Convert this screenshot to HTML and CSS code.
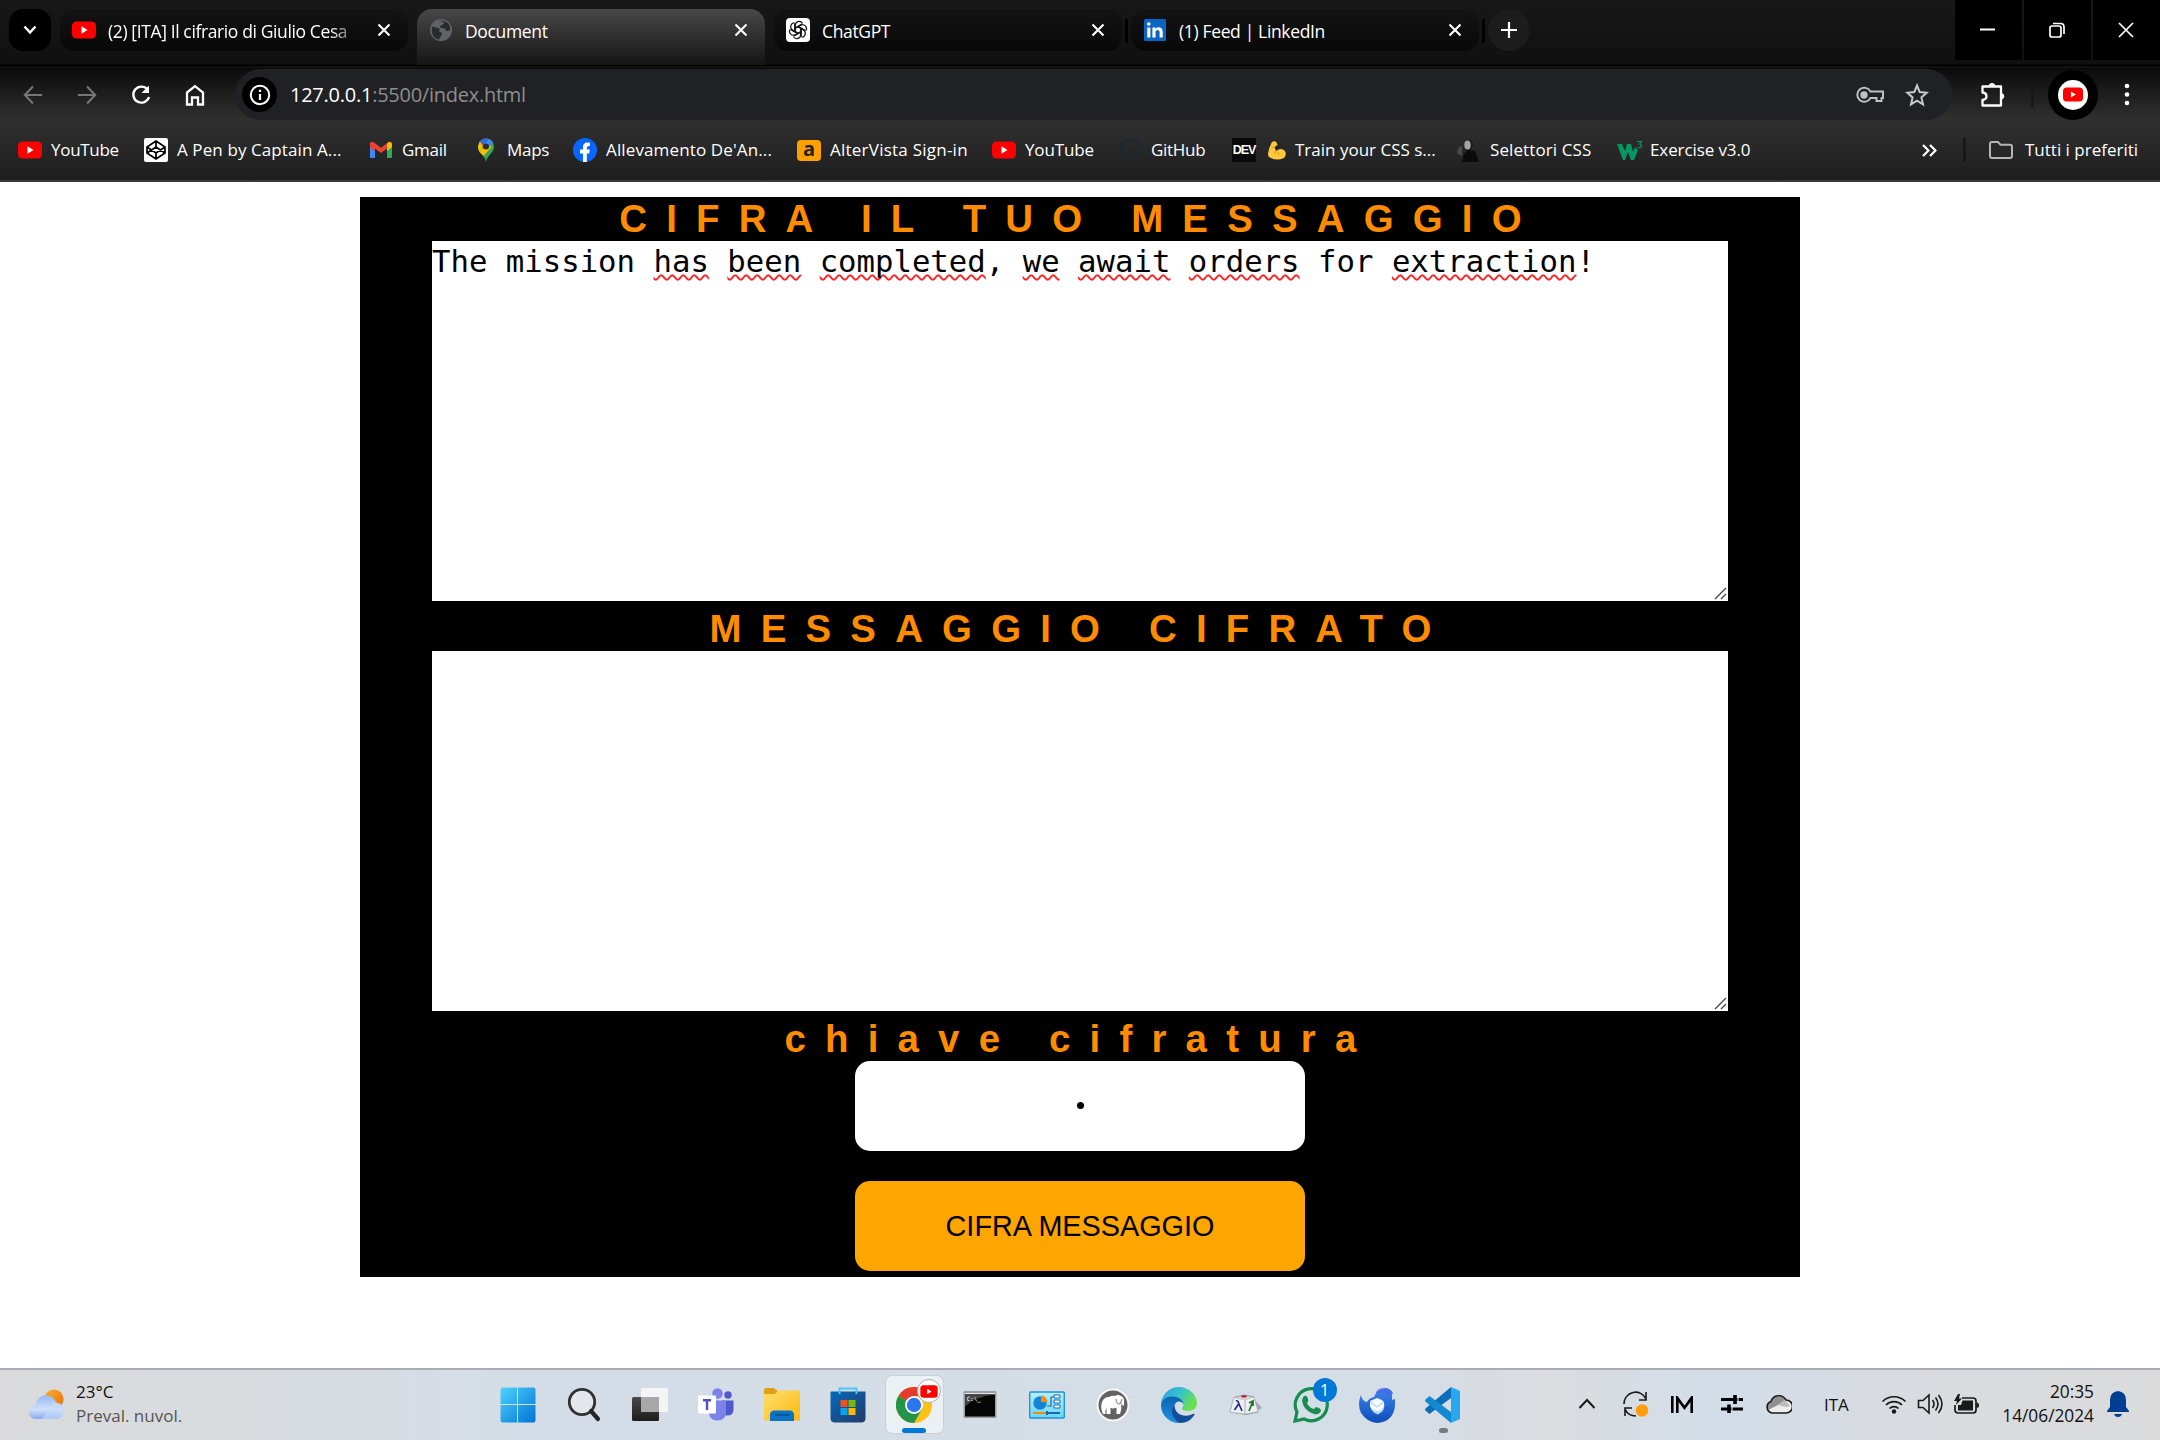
FILE: index.html
```html
<!DOCTYPE html>
<html lang="it">
<head>
<meta charset="utf-8">
<title>Document</title>
<link rel="stylesheet" href="styles.css">
</head>
<body>
<svg class="defs" width="0" height="0">
  <defs>
    <linearGradient id="win" x1="0" y1="0" x2="1" y2="1"><stop offset="0" stop-color="#4fd3ff"/><stop offset="1" stop-color="#0073d2"/></linearGradient>
    <linearGradient id="sun" x1="0" y1="0" x2="1" y2="1"><stop offset="0" stop-color="#f2b62c"/><stop offset="1" stop-color="#f0660c"/></linearGradient>
    <linearGradient id="cloud" x1="0" y1="0" x2="0" y2="1"><stop offset="0" stop-color="#94b8f2"/><stop offset=".6" stop-color="#cfe0fa"/><stop offset="1" stop-color="#86aaf0"/></linearGradient>
    <linearGradient id="dark" x1="0" y1="0" x2="0" y2="1"><stop offset="0" stop-color="#4a4a4a"/><stop offset="1" stop-color="#1c1c1c"/></linearGradient>
    <linearGradient id="folder" x1="0" y1="0" x2="1" y2="1"><stop offset="0" stop-color="#ffdf70"/><stop offset="1" stop-color="#fbb90e"/></linearGradient>
    <linearGradient id="store" x1="0" y1="0" x2="1" y2="1"><stop offset="0" stop-color="#0669b8"/><stop offset="1" stop-color="#243a6b"/></linearGradient>
    <linearGradient id="edgeA" x1="0" y1="0" x2="1" y2=".5"><stop offset="0" stop-color="#2a9fe0"/><stop offset=".5" stop-color="#35c1d0"/><stop offset="1" stop-color="#6be04e"/></linearGradient>
    <linearGradient id="edgeB" x1="0" y1="0" x2="0" y2="1"><stop offset="0" stop-color="#0c62b0"/><stop offset="1" stop-color="#1b93e0"/></linearGradient>
    <linearGradient id="bird" x1="0" y1="0" x2="0" y2="1"><stop offset="0" stop-color="#3f86f0"/><stop offset="1" stop-color="#0c4db8"/></linearGradient>
    <linearGradient id="panel" x1="0" y1="0" x2="0" y2="1"><stop offset="0" stop-color="#b5effc"/><stop offset="1" stop-color="#6cd6f7"/></linearGradient>
    <symbol id="yt" viewBox="0 0 24 18"><rect y=".5" width="24" height="17" rx="4.5" fill="#f00"/><path d="M9.500 5.300v7.400L15.500 9z" fill="#fff"/></symbol>
    <symbol id="x" viewBox="0 0 14 14"><path d="M1.500 1.500l11 11M12.500 1.500l-11 11" stroke="#fff" stroke-width="2.100" fill="none"/></symbol>
  </defs>
</svg>

<header class="browser">
  <div class="tabstrip">
    <button class="search-tabs"><svg width="14" height="10" viewBox="0 0 14 10"><path d="M1.500 1.500L7 7.500l5.500-6" fill="none" stroke="#fff" stroke-width="2.400"/></svg></button>
    <div class="tab first">
      <svg class="fav" width="24" height="18"><use href="#yt"/></svg>
      <span class="title fade t1">(2) [ITA] Il cifrario di Giulio Cesa</span>
      <svg class="close" width="14" height="14"><use href="#x"/></svg>
    </div>
    <div class="tab active">
      <svg class="fav" width="24" height="24" viewBox="0 0 24 24"><circle cx="12" cy="12" r="11" fill="#5f6368"/><path d="M3 9c3-1 4 1 6 1s2 2 1 4c3 0 4 2 2 4s-1 3-2 3.500C5 21 2 16 3 9zM10 3c2 1 5 0 5 2s-4 2-4 4 4 0 5 2 3 3 5 1c1-5-3-10-11-9z" fill="#2b2b2b"/></svg>
      <span class="title">Document</span>
      <svg class="close" width="14" height="14"><use href="#x"/></svg>
    </div>
    <div class="tab">
      <svg class="fav" width="24" height="24" viewBox="0 0 24 24"><rect width="24" height="24" rx="4" fill="#fff"/><g fill="none" stroke="#111" stroke-width="1.200"><path id="petal" d="M9.300 13.600V7.300a3.900 3.900 0 0 1 7.200-2M9.300 9.800l5.300-3.100a3.900 3.900 0 0 1 1.900-.5"/><use href="#petal" transform="rotate(60 12 12)"/><use href="#petal" transform="rotate(120 12 12)"/><use href="#petal" transform="rotate(180 12 12)"/><use href="#petal" transform="rotate(240 12 12)"/><use href="#petal" transform="rotate(300 12 12)"/></g></svg>
      <span class="title">ChatGPT</span>
      <svg class="close" width="14" height="14"><use href="#x"/></svg>
    </div>
    <i class="tab-sep"></i>
    <div class="tab">
      <svg class="fav" width="22" height="22" viewBox="0 0 22 22"><rect width="22" height="22" rx="1.500" fill="#0a66c2"/><path d="M3.300 8.500h3.100v10H3.300zM8.400 8.500h3v1.400c1.400-2.500 7.300-2.500 7.300 2.800v5.800h-3.100v-5.300c0-3.100-4.100-2.900-4.100 0v5.300H8.400z" fill="#fff"/><circle cx="4.800" cy="5" r="1.800" fill="#fff"/></svg>
      <span class="title feed">(1) Feed | LinkedIn</span>
      <svg class="close" width="14" height="14"><use href="#x"/></svg>
    </div>
    <i class="tab-sep last"></i>
    <button class="new-tab"><svg width="16" height="16" viewBox="0 0 16 16"><path d="M8 0v16M0 8h16" stroke="#fff" stroke-width="2.200"/></svg></button>
    <div class="window-buttons">
      <span><svg width="15" height="16" viewBox="0 0 15 16"><path d="M0 7.500h15" stroke="#fff" stroke-width="2"/></svg></span>
      <span><svg width="16" height="16" viewBox="0 0 16 16" fill="none" stroke="#fff" stroke-width="1.700"><rect x="1" y="4" width="11" height="11" rx="2"/><path d="M4 1.500h7.500c2 0 3.500 1.500 3.500 3.500v7"/></svg></span>
      <span><svg width="16" height="16" viewBox="0 0 16 16"><path d="M1 1l14 14M15 1L1 15" stroke="#fff" stroke-width="1.700"/></svg></span>
    </div>
  </div>

  <div class="toolbar">
    <nav class="nav">
      <svg width="20" height="20" viewBox="0 0 20 20" fill="none" stroke="#777" stroke-width="2"><path d="M19 10H2M10 1.500L1.800 10l8.200 8.500"/></svg>
      <svg width="20" height="20" viewBox="0 0 20 20" fill="none" stroke="#777" stroke-width="2"><path d="M1 10h17M10 1.500l8.200 8.500-8.200 8.500"/></svg>
      <svg width="20" height="20" viewBox="0 0 20 20" fill="none" stroke="#fff" stroke-width="2.400"><path d="M16.500 4.500A8 8 0 1 0 18 12"/><path d="M18 .500v7.500h-7.500z" fill="#fff" stroke="none"/></svg>
      <svg width="20" height="22" viewBox="0 0 20 22" fill="none" stroke="#fff" stroke-width="2.300"><path d="M2 8.500l8-6.300 8 6.300v12h-5v-7H7v7H2z"/></svg>
    </nav>
    <div class="omnibox">
      <span class="info"><svg width="22" height="22" viewBox="0 0 22 22"><circle cx="11" cy="11" r="9.200" fill="none" stroke="#fff" stroke-width="2"/><path d="M11 10v6M11 5.800v2.200" stroke="#fff" stroke-width="2.200"/></svg></span>
      <span class="url"><b>127.0.0.1</b>:5500/index.html</span>
      <svg class="key" width="28" height="18" viewBox="0 0 28 18" fill="none" stroke="#c0c0c0" stroke-width="2"><path d="M14.500 5.500H27v6.500h-1.500v3h-5v-3h-6A7 7 0 1 1 14.500 5.500z"/><circle cx="8" cy="9" r="2.700" fill="#c0c0c0"/></svg>
      <svg class="star" width="24" height="24" viewBox="0 0 24 24" fill="none" stroke="#c8c8c8" stroke-width="2"><path d="M12 2.500l2.700 6.600 7 .6-5.300 4.700 1.600 6.900-6-3.700-6 3.700 1.600-6.900-5.300-4.700 7-.6z"/></svg>
    </div>
    <svg class="puzzle" width="26" height="26" viewBox="0 0 26 26" fill="none" stroke="#fff" stroke-width="2.300"><path d="M2.500 4.500h18.500v19H2.500v-5.500q4-.500 4-3.700t-4-3.800z" stroke-linejoin="round"/><path d="M9 4.500a3 3 0 0 1 6 0zM21 11.500a2.800 2.800 0 0 1 0 5.600z" fill="#fff" stroke-width="1"/></svg>
    <i class="bar-sep"></i>
    <span class="avatar"><span><svg width="20" height="15"><use href="#yt"/></svg></span></span>
    <svg class="dots" width="6" height="28" viewBox="0 0 6 28" fill="#fff"><circle cx="3" cy="3" r="2.300"/><circle cx="3" cy="11.500" r="2.300"/><circle cx="3" cy="20" r="2.300"/></svg>
  </div>

  <div class="bookmarks">
    <a><svg width="24" height="18"><use href="#yt"/></svg><span class="b-yt">YouTube</span></a>
    <a><svg width="24" height="24" viewBox="0 0 24 24"><rect width="24" height="24" rx="2" fill="#fff"/><path d="M12 3l9 6v6l-9 6-9-6V9zM12 3v6M12 15v6M3 9l9 6 9-6M3 15l9-6 9 6" fill="none" stroke="#000" stroke-width="1.700"/></svg><span class="b-pen">A Pen by Captain A...</span></a>
    <a><svg width="24" height="18" viewBox="0 0 24 18"><path d="M1 3v13q0 1 1 1h4V7z" fill="#4285f4"/><path d="M23 3v13q0 1-1 1h-4V7z" fill="#34a853"/><path d="M1 2q2-2 4-.500l7 5.200 7-5.200Q22 0 23 2l-5 8V7.500L12 12 6 7.500V10L1 6.500z" fill="#ea4335"/><path d="M18 7.500V2.300L20 1q3 0 3 2.500V6l-5 4z" fill="#fbbc04"/></svg><span class="b-gmail">Gmail</span></a>
    <a><svg width="24" height="24" viewBox="0 0 24 24"><path d="M12 24C11 17 4 15 4 8.500a8 8 0 0 1 16 0C20 15 13 17 12 24z" fill="#34a853"/><path d="M5.500 14Q4 11.500 4 8.500L6 3l3 3-1 5z" fill="#fbbc04"/><path d="M5.500 14l9-10 3 5-8 9z" fill="#fbbc04"/><path d="M6 3.200Q9-.500 14.500 1L8.500 8z" fill="#ea4335"/><path d="M14.500.900q3 1 4.500 4l-6 6.500-3-5z" fill="#4285f4"/><path d="M8 1.800Q11 0 14.500.900L9.500 7 6 3.300z" fill="#1a73e8"/><circle cx="12" cy="8.500" r="3" fill="#2d2d2d"/></svg><span class="b-maps">Maps</span></a>
    <a><svg width="24" height="24" viewBox="0 0 24 24"><circle cx="12" cy="12" r="12" fill="#0866ff"/><path d="M10 24v-8.500H7v-4h3V9.500c0-4 2-5.500 7-4.800v3.400c-2.500-.2-3.200.3-3.200 3.400h3l-.6 4h-2.400V24z" fill="#fff"/></svg><span class="b-alle">Allevamento De'An...</span></a>
    <a><i class="alter">a</i><span class="b-alt">AlterVista Sign-in</span></a>
    <a><svg width="24" height="18"><use href="#yt"/></svg><span class="b-yt2">YouTube</span></a>
    <a><svg width="24" height="24" viewBox="0 0 24 24"><path d="M9 23v-4q-3 1-4-2l-2-2q2-.500 3.500 2 1.500 1 3 0 0-2 1-2.500-6-1-5.500-7l1-2V3q2 0 3.500 1.200h5Q16 3 18 3v3q2 3 .500 6-1 2-4.500 2.500 1 1 1 3V23A11.500 11.500 0 1 0 9 23z" fill="#20272e"/></svg><span class="b-git">GitHub</span></a>
    <a><i class="dev">DEV</i><svg class="arm" width="18" height="19" viewBox="0 0 18 19"><path d="M4 1q3-1.500 4.500.500l1 2.500-3 2L8 10q5-4 9 0 2 4-1 7-7 3-13 0-3-1-3-4Q1 6 4 1z" fill="#ffc83d"/><path d="M6 6L3.500 7M8 10l-2 3M9 11q2 1 1.500 3" fill="none" stroke="#e89f1c" stroke-width="1.200"/></svg><span class="b-css">Train your CSS s...</span></a>
    <a><svg width="24" height="24" viewBox="0 0 24 24"><path d="M3 8q-4 5-2 8l4 2V9z" fill="#484848"/><path d="M9 2q6-1 7 5l-2 5-4 2-3-5z" fill="#1a1a1a"/><ellipse cx="10.500" cy="7" rx="3.200" ry="4.500" fill="#a5a5a5"/><path d="M5 24l2-8 4-4 7 1 4 11z" fill="#0b0b0b"/></svg><span class="b-sel">Selettori CSS</span></a>
    <a><svg width="26" height="20" viewBox="0 0 26 20"><path d="M0 4h5l3 7 2-7h4l2 8 2-5 3 3-4 10h-3l-3-8-3 8H6z" fill="#059862"/><path d="M20 1.500h4.500l-2 2.500q2 0 2 2t-4 1.500" fill="none" stroke="#059862" stroke-width="1.200"/></svg><span class="b-ex">Exercise v3.0</span></a>
    <svg class="more" width="15" height="13" viewBox="0 0 15 13" fill="none" stroke="#fff" stroke-width="2.200"><path d="M1 1l5.500 5.500L1 12M8 1l5.500 5.500L8 12"/></svg>
    <i class="bar-sep"></i>
    <a><svg width="24" height="18" viewBox="0 0 24 18"><path d="M3 1h6l2.500 2.700H21q2 0 2 2V15q0 2-2 2H3q-2 0-2-2V3q0-2 2-2z" fill="none" stroke="#b5b5b5" stroke-width="2"/></svg><span class="b-all">Tutti i preferiti</span></a>
  </div>
</header>

<main class="page">
  <section class="cipher">
    <h2>CIFRA IL TUO MESSAGGIO</h2>
    <div class="area">The mission <u>has</u> <u>been</u> <u>completed</u>, <u>we</u> <u>await</u> <u>orders</u> for <u>extraction</u>!<svg class="grip" width="13" height="13" viewBox="0 0 13 13"><path d="M1 12L12 1M7 12l5-5" stroke="#444" stroke-width="1.300"/></svg></div>
    <h2>MESSAGGIO CIFRATO</h2>
    <div class="area"><svg class="grip" width="13" height="13" viewBox="0 0 13 13"><path d="M1 12L12 1M7 12l5-5" stroke="#444" stroke-width="1.300"/></svg></div>
    <h2>chiave cifratura</h2>
    <div class="key-field"><i></i></div>
    <button class="submit">CIFRA MESSAGGIO</button>
  </section>
</main>

<footer class="taskbar">
  <div class="weather">
    <svg width="36" height="31" viewBox="0 0 36 31"><circle cx="25" cy="10" r="9.500" fill="url(#sun)"/><path d="M7 30a7 7 0 0 1-.5-14A10.500 10.500 0 0 1 27 13.500 8.300 8.300 0 0 1 28 30z" fill="url(#cloud)"/><path d="M20 20q1-6 7-6.500a8.300 8.300 0 0 1 1 16.500H13z" fill="#c8dbf8" opacity=".6"/></svg>
    <p><span class="w1">23°C</span><span class="w2">Preval. nuvol.</span></p>
  </div>
  <div class="apps">
    <span><svg width="36" height="36" viewBox="0 0 36 36"><path d="M.500 2.500q0-2 2-2H17V17H.500zM18 .500h15.500q2 0 2 2V17H18zM.500 18H17v17.500H2.500q-2 0-2-2zM18 18h17.500v15.500q0 2-2 2H18z" fill="url(#win)"/></svg></span>
    <span><svg width="36" height="36" viewBox="0 0 36 36"><circle cx="16" cy="15" r="12.700" fill="#e3e6ea" stroke="#303030" stroke-width="2.800"/><path d="M25 24l7 8" stroke="#242424" stroke-width="4.200" stroke-linecap="round"/></svg></span>
    <span><svg width="36" height="36" viewBox="0 0 36 36"><rect x="0" y="10" width="27" height="24" rx="1.500" fill="url(#dark)"/><rect x="9" y="1" width="27" height="24" rx="1.500" fill="#f4f4f4"/><path d="M9 10h18v15H9z" fill="#a8a8a8"/></svg></span>
    <span><svg width="36" height="36" viewBox="0 0 36 36"><circle cx="19.500" cy="6.500" r="5.300" fill="#7b83eb"/><circle cx="30" cy="8" r="3.700" fill="#5059c9"/><path d="M24 13.500h11.500v9q0 6-6 6T24 24z" fill="#5059c9"/><path d="M11 13.500h17V25q0 8.500-8.500 8.500T11 25z" fill="#7b83eb"/><rect x="0" y="8.500" width="18" height="18" rx="1" fill="#fff"/><path d="M5 13.300h8M9 13v10" stroke="#4b53bc" stroke-width="2.400"/></svg></span>
    <span><svg width="36" height="36" viewBox="0 0 36 36"><path d="M0 3q0-2 2-2h8l4 3.500v6H0z" fill="#dfa011"/><path d="M0 7h11l3-3.500h20q2 0 2 2v28H0z" fill="url(#folder)"/><path d="M6 34v-6q0-4.500 4.500-4.500h15Q30 23.500 30 28v6z" fill="#0b72c4"/><path d="M11 28h14" stroke="#054c88" stroke-width="1.500"/></svg></span>
    <span><svg width="36" height="36" viewBox="0 0 36 36"><path d="M.500 4.500h35V31q0 4.500-4.500 4.500H5Q.500 35.500.500 31z" fill="url(#store)"/><path d="M9.500 7V1.500h17V7" fill="none" stroke="#43c8fa" stroke-width="2"/><path d="M10.500 13h7v7h-7z" fill="#f25022"/><path d="M18.500 13h7v7h-7z" fill="#7fba00"/><path d="M10.500 21h7v7h-7z" fill="#00a4ef"/><path d="M18.500 21h7v7h-7z" fill="#ffb900"/></svg></span>
    <span class="current"><svg width="36" height="36" viewBox="0 0 36 36"><circle cx="18" cy="18" r="18" fill="#fbc116"/><path d="M18 18L2.400 9A18 18 0 0 1 33.600 9H18z" fill="#e33b2e"/><path d="M18 18l7.800 4.500L18 36A18 18 0 0 1 2.400 9z" fill="#229548"/><circle cx="18" cy="18" r="9" fill="#fff"/><circle cx="18" cy="18" r="7.200" fill="#2a77ee"/></svg><span class="profile"><svg width="18" height="13"><use href="#yt"/></svg></span></span>
    <span><svg width="36" height="36" viewBox="0 0 36 36"><rect x="1.500" y="4" width="33" height="27" rx="1" fill="#9a9da0"/><path d="M3 6h30v1H3z" fill="#e6e6e6"/><path d="M3 7.500h30v22H3z" fill="#050505"/><path d="M3 7.500h30q-20 2-30 12z" fill="#444"/><text x="4.500" y="14" class="cmd">C:\_</text></svg></span>
    <span><svg width="36" height="36" viewBox="0 0 36 36"><rect x=".7" y="5" width="34.600" height="26" rx="1" fill="url(#panel)" stroke="#1d93d8" stroke-width="1.400"/><circle cx="11" cy="16" r="6.700" fill="#1584d4"/><path d="M12 15V8.500a6.500 6.500 0 0 1 6.500 6.500z" fill="#f78b10"/><path d="M18 19h4v-9h3" fill="none" stroke="#156ab0" stroke-width="1.200"/><path d="M25 8h6v3h-6zM25 13h6v3h-6zM25 18h6v3h-6z" fill="#fff" stroke="#156ab0"/><path d="M4 26h14" stroke="#f78b10" stroke-width="2"/><path d="M18 26h13M18 24v4" stroke="#156ab0" stroke-width="2"/></svg></span>
    <span><svg width="36" height="36" viewBox="0 0 36 36"><circle cx="18" cy="18" r="15.500" fill="#626262" stroke="#f6f6f6" stroke-width="2"/><path d="M8 27q-3-6-1-12 2-5 7-5 3-2 6-1 3-2 6 0 4 1 3 9-1 1-2 0l-1-3q1 7-1 12h-3.500v-6.500q-4 2-6 0V27h-4v-6.500q-1.500 3-1 6.500z" fill="#fff"/><path d="M21 12q0 5 4 5l2-5" fill="none" stroke="#777"/></svg></span>
    <span><svg width="36" height="36" viewBox="0 0 36 36"><path d="M0 18C0 8 8 0 18 0S36 8 36 16c0 5-4 8-9 8-4 0-6-1-6-2.500 0-1 1.500-1.500 1.500-4C22.500 14 18 10 13 10 6 10 2 13 0 18z" fill="url(#edgeA)"/><path d="M0 18C1 12 6 9.500 12 9.500c6 0 10.500 4 10.500 8-2-4-7-4-9 .5-2 6 1 14 8 17.500-1.200.4-2.500.5-3.500.5A18 18 0 0 1 0 18z" fill="url(#edgeB)"/><path d="M13.500 18c-5 5-2 15.500 6 18 7 0 11.500-4 14-8.200.5-.8-.2-1.400-1-1C24 31 13.500 28 13.500 18z" fill="#114f99"/></svg></span>
    <span><svg width="36" height="36" viewBox="0 0 36 36"><path d="M27 12l8 9-8 5z" fill="#a5abb5"/><path d="M7 10.500l10-2.500 10 2 4 15-12 2.500L3 25z" fill="#d8dae0" stroke="#8f939c"/><path d="M7 10.500l11 2.500v14L3 25zM18 13l9-3 4 14.500-13 2.500z" fill="#eef0f4" stroke="#b0b3bb" stroke-width=".6"/><path d="M14.500 8.500h5v2h-5z" fill="#c01818"/><path d="M9 14q2-1 3 3l3 7M11.500 17l-4 6" fill="none" stroke="#20208a" stroke-width="1.600"/><path d="M22 16l4-2v5M26 14l-4 10" fill="none" stroke="#187a24" stroke-width="1.700"/></svg></span>
    <span class="wa"><svg width="36" height="36" viewBox="0 0 36 36"><path d="M2 34l2-9A16 16 0 1 1 11 32z" fill="none" stroke="#168c50" stroke-width="3.200"/><path d="M11 9q3-1 4 3 1 2-1 4 2 5 7 6l2-2q5 1 5 4-2 4-7 3Q11 24 9 14q0-3 2-5z" fill="#168c50"/></svg><span class="count">1</span></span>
    <span><svg width="36" height="36" viewBox="0 0 36 36"><path d="M2 8q-4 9 0 18 6 9 16 10 16-1 18-17v-7l-3 1q1-7-6-11-7-2-10 4l-2 4q-5 1-7 5Q3 14 2 8z" fill="url(#bird)"/><path d="M17 6q2-5 9-5 5 0 8 5l-2 3q-8-4-15-3z" fill="#3f6fe4"/><path d="M17 5q3-5 10-4-6 1-10 4z" fill="#a48cf0"/><path d="M11 15q2 0 7-3.500 5 0 7 4 2 8-6 12-9-3-8-12.500z" fill="#b4dcff"/><path d="M11 14l7-3 7 4v4q-2 5-7 5-6-1-7-5z" fill="#f4f8ff"/><path d="M11 14l6.500 6 7.500-5" fill="none" stroke="#a9c6ec"/></svg></span>
    <span class="code"><svg width="36" height="36" viewBox="0 0 36 36"><path d="M26 0v11L4.500 27 1 24q-2-1 0-3z" fill="#0a6fb8"/><path d="M1 12l3.500-3L26 25v11L1 15q-2-1.500 0-3z" fill="#1488d0"/><path d="M26 0l9 4v28l-9 4z" fill="#29a8f2"/></svg></span>
  </div>
  <div class="tray">
    <svg width="18" height="12" viewBox="0 0 18 12"><path d="M1.500 10L9 2l7.500 8" fill="none" stroke="#1a1a1a" stroke-width="2"/></svg>
    <svg width="26" height="26" viewBox="0 0 26 26"><path d="M1 13A11.500 11.500 0 0 1 23 8M23 1v8h-7M2 25v-8h7M2 18q3 7 11 7" fill="none" stroke="#1a1a1a" stroke-width="1.600"/><circle cx="19" cy="19.500" r="6.200" fill="#ff9c0a"/></svg>
    <svg width="22" height="17" viewBox="0 0 22 17"><path d="M0 0h2.600v17H0zM5 0h1.500L13.500 9.500 20.300 0H22v17h-2.600V6l-5.900 8L7.600 6v11H5z" fill="#000"/></svg>
    <svg width="22" height="18" viewBox="0 0 22 18"><path d="M0 4.500h22M0 14h22" stroke="#000" stroke-width="3"/><path d="M14 0v9M8 9.500v9" stroke="#000" stroke-width="3.600"/><path d="M17 0v9M11 9.500v9" stroke="#d4dde7" stroke-width="1.200"/></svg>
    <svg width="26" height="20" viewBox="0 0 26 20"><path d="M6 19A6 6 0 0 1 5 7.500 8.200 8.200 0 0 1 20 6a6.500 6.500 0 0 1 0 13z" fill="#ededed"/><path d="M2 16Q0 9 5 7.500A8 8 0 0 1 19 6l-7 5z" fill="#909090"/><path d="M12 11l7-5 5 6-4 1z" fill="#bbb"/><path d="M6 19A6 6 0 0 1 5 7.500 8.200 8.200 0 0 1 20 6a6.500 6.500 0 0 1 0 13z" fill="none" stroke="#1a1a1a" stroke-width="1.600"/></svg>
    <span class="lang">ITA</span>
    <svg width="26" height="20" viewBox="0 0 26 20"><g fill="none" stroke="#1a1a1a" stroke-width="1.700"><path d="M1.500 7.500a16.300 16.300 0 0 1 23 0M5 11a11.400 11.400 0 0 1 16 0M8.500 14.500a6.400 6.400 0 0 1 9 0"/></g><circle cx="13" cy="17.500" r="2.200" fill="#1a1a1a"/></svg>
    <svg width="26" height="22" viewBox="0 0 26 22" fill="none" stroke="#1a1a1a" stroke-width="1.600"><path d="M1.500 7.500h4.500l6-5.500v18l-6-5.500H1.500zM15.500 7q3 4 0 8M18.500 4.500q5 6.500 0 13M21.500 2q7 9 0 18"/></svg>
    <svg width="26" height="20" viewBox="0 0 26 20"><path d="M9 4h11q3 0 3 3v9q0 3-3 3H5q-3 0-3-3v-5" fill="none" stroke="#1a1a1a" stroke-width="1.700"/><path d="M9.500 6.500h10.500v10H5V11h3z" fill="#1a1a1a"/><path d="M23.500 8.500q2.500 0 2.500 2.800t-2.500 2.700zM5 0L1 7h3l-1 4 6-6.500H6L7 0z" fill="#1a1a1a"/></svg>
    <p class="clock"><span class="c1">20:35</span><span class="c2">14/06/2024</span></p>
    <svg width="22" height="26" viewBox="0 0 22 26"><path d="M11 0q8 1 8 9v7l3 4v1H0v-1l3-4V9q0-8 8-9zM7 23h8q-1 3-4 3t-4-3z" fill="#003e92"/></svg>
  </div>
</footer>
</body>
</html>
```

FILE: styles.css
```css
* { box-sizing: border-box; }
body {
  margin: 0;
  width: 2160px;
  height: 1440px;
  overflow: hidden;
  display: flex;
  flex-direction: column;
  background: #fff;
  font-family: "Open Sans", "Noto Sans", sans-serif;
}
svg { display: block; flex: none; }
.defs { position: absolute; }
button { border: 0; padding: 0; font: inherit; }
p { margin: 0; }

.browser {
  height: 182px;
  flex: none;
  background: #151515;
  border-bottom: 2px solid #3a3838;
  color: #fff;
}

.tabstrip {
  height: 69px;
  display: flex;
  align-items: flex-start;
  padding: 9px 0 0 9px;
  background: linear-gradient(#181818, #101010 64px, #000 65px, #000 66px, #1c1c1c 67px, #000 69px);
}
.search-tabs {
  width: 42px;
  height: 42px;
  border-radius: 14px;
  background: #000;
  display: grid;
  place-items: center;
}
.tab {
  width: 348px;
  height: 42px;
  margin-left: 9px;
  padding: 0 17px 0 12px;
  display: flex;
  align-items: center;
  border-radius: 14px;
  background: linear-gradient(#141414, #080808);
  font-size: 17.500px;
}
.tab .fav { width: 24px; }
.tab .title {
  flex: 1;
  min-width: 0;
  margin: 1px 12px 0;
  white-space: nowrap;
  letter-spacing: -.35px;
}
.tab .title.t1 { letter-spacing: -.38px; margin-right: 17px; }
.fade { mask-image: linear-gradient(90deg, #000 88%, transparent 101%); }
.tab.active {
  height: 56px;
  padding-bottom: 14px;
  border-radius: 15px 15px 0 0;
  background: linear-gradient(#484848, #151515);
}
.tab.active + .tab { margin-left: 9px; }
.tab-sep { width: 3px; height: 24px; margin: 10px 0 0 3px; background: #000; }
.tab-sep + .tab { margin-left: 3px; }
.new-tab {
  width: 42px;
  height: 42px;
  margin-left: 3px;
  border-radius: 50%;
  background: #1c1c1c;
  display: grid;
  place-items: center;
}
.window-buttons {
  margin: -9px 0 0 auto;
  width: 205px;
  height: 60px;
  display: grid;
  grid-template-columns: repeat(3, 1fr);
  gap: 2px;
}
.window-buttons span { display: grid; place-items: center; background: #000; padding-right: 2px; }

.toolbar {
  height: 51px;
  display: flex;
  align-items: center;
  background: linear-gradient(#0c0c0c, #303030);
}
.nav { width: 235px; padding-left: 23px; display: flex; gap: 34px; align-items: center; }
.omnibox {
  width: 1717px;
  height: 51px;
  border-radius: 26px;
  background: #202124;
  display: flex;
  align-items: center;
  padding: 0 23px 0 7px;
}
.info { width: 35px; height: 35px; border-radius: 50%; background: #000; display: grid; place-items: center; }
.url { margin-left: 13px; font-size: 20px; color: #8e8e8e; letter-spacing: -.25px; }
.url b { font-weight: 400; color: #fff; }
.key { margin-left: auto; margin-right: 21px; }
.puzzle { margin-left: 28px; }
.bar-sep { width: 3px; height: 24px; background: #181818; }
.toolbar .bar-sep { margin-left: 25px; }
.avatar { width: 50px; height: 50px; margin-left: 14px; border-radius: 50%; background: #000; display: grid; place-items: center; }
.avatar span { width: 30px; height: 30px; border-radius: 50%; background: #fff; display: grid; place-items: center; }
.dots { margin: 5px 0 0 26px; }

.bookmarks {
  height: 60px;
  padding-left: 18px;
  display: grid;
  grid-template-columns: 126px 225px 105px 99px 224px 195px 126px 114px 225px 160px 305px 41px 26px 1fr;
  align-items: center;
  background: linear-gradient(#303030, #1e1e1e);
  font-size: 17px;
}
.bookmarks a { display: flex; align-items: center; white-space: nowrap; letter-spacing: -.3px; }
.bookmarks a span { margin: -2px 0 0 9px; }
.bookmarks .b-pen { letter-spacing: .1px; }
.bookmarks .b-alle { letter-spacing: .13px; }
.bookmarks .b-alt { letter-spacing: .24px; }
.bookmarks .b-yt2 { letter-spacing: -.15px; }
.bookmarks .b-css { letter-spacing: 0; }
.bookmarks .b-sel { letter-spacing: .1px; }
.bookmarks .b-ex { margin-left: 7px; letter-spacing: -.1px; }
.bookmarks .b-all { margin-left: 12px; letter-spacing: 0; }
.bookmarks .arm { margin: 0 0 0 12px; }
.alter {
  width: 24px;
  height: 21px;
  border-radius: 4px;
  background: #ffa000;
  color: #222;
  font: bold 20px/17px "Open Sans", sans-serif;
  text-align: center;
}
.dev {
  width: 24px;
  height: 24px;
  background: #0a0a0a;
  color: #fff;
  font: bold 12.500px/24px "Liberation Sans", sans-serif;
  letter-spacing: -1px;
  text-align: center;
}

.page { flex: 1; padding-top: 15px; }
.cipher {
  width: 1440px;
  height: 1080px;
  margin: 0 auto;
  background: #000;
  display: flex;
  flex-direction: column;
  align-items: center;
  font-family: "Liberation Sans", Arial, sans-serif;
}
.cipher h2 {
  margin: 0;
  height: 44px;
  line-height: 44px;
  font-size: 38.400px;
  letter-spacing: .5em;
  color: #ff8c00;
}
.area {
  position: relative;
  width: 1296px;
  height: 360px;
  margin-bottom: 6px;
  padding: 1px 0;
  background: #fff;
  color: #000;
  font: 30.660px/40px "DejaVu Sans Mono", monospace;
}
.area u { text-decoration: underline wavy #f22 1.500px; text-underline-offset: 1.500px; text-decoration-skip-ink: none; }
.grip { position: absolute; right: 1px; bottom: 1px; }
.key-field {
  width: 450px;
  height: 90px;
  border-radius: 15px;
  background: #fff;
  display: grid;
  place-items: center;
}
.key-field i { width: 7px; height: 7px; margin-top: -2px; border-radius: 50%; background: #000; }
.submit {
  width: 450px;
  height: 90px;
  margin-top: 30px;
  border-radius: 15px;
  background: #ffa500;
  color: #000;
  font-size: 28.800px;
}

.taskbar {
  height: 72px;
  flex: none;
  display: grid;
  grid-template-columns: 484px 1095px 1fr;
  border-top: 2px solid #a9adb3;
  background: linear-gradient(90deg, #dadadc, #d8dcdf 250px, #d4dde7 520px, #d5dde6 1400px, #dadcdf 1540px, #d3dde8 1720px, #d9dbdf 1930px, #dbdbdc);
}
.weather { display: flex; align-items: center; padding: 0 0 2px 29px; }
.weather p { margin-left: 11px; display: grid; line-height: 24px; font-size: 17px; color: #111; white-space: nowrap; }
.weather .w2 { color: #555; }
.apps { display: grid; grid-template-columns: repeat(15, 66.140px); align-items: center; height: 69px; }
.apps > span { position: relative; display: grid; place-items: center; width: 57px; height: 57px; margin-left: 5px; }
.current { background: #ebf0f5; border-radius: 6px; box-shadow: 0 0 0 1px #c9d0d8; }
.current::after, .code::after {
  content: "";
  position: absolute;
  bottom: 0;
  width: 24px;
  height: 5px;
  border-radius: 3px;
  background: #0078d7;
}
.code::after { width: 9px; background: #777c82; }
.profile { position: absolute; right: 2px; top: 3px; width: 24px; height: 24px; border-radius: 50%; background: #fff; border: 1px solid #aaa; display: grid; place-items: center; }
.count { position: absolute; right: 3px; top: 2px; width: 24px; height: 24px; border-radius: 50%; background: #0078d7; color: #fff; font-size: 16px; line-height: 24px; text-align: center; }
.cmd { font: bold 6px "DejaVu Sans Mono", monospace; fill: #ddd; }
.tray {
  display: grid;
  grid-template-columns: 44px 48px 50px 45px 58px 57px 36px 36px 46px 96px 34px;
  align-items: center;
  height: 68px;
}
.tray > svg:first-child { margin-left: -1px; }
.lang { font-size: 17px; color: #111; }
.clock { display: grid; line-height: 24px; font-size: 17.300px; color: #111; text-align: right; justify-items: end; white-space: nowrap; }
.clock span { margin-right: 1px; }
.tray > svg:last-child { margin-left: 12px; }
```
